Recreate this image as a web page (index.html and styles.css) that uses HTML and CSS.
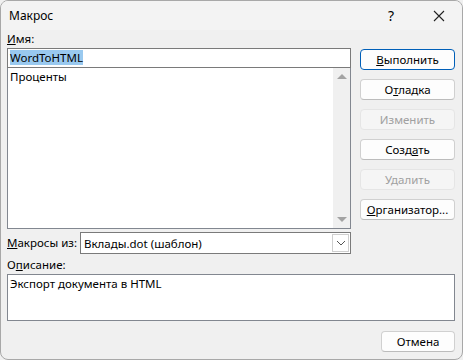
FILE: index.html
```html
<!DOCTYPE html>
<html lang="ru">
<head>
    <meta charset="UTF-8">
    <title>Макрос</title>
    <link rel="stylesheet" href="styles.css">
</head>
<body>
    <div class="dialog">
        <div class="titlebar">
            <span class="title">Макрос</span>
            <span class="help">?</span>
            <span class="close">
                <svg width="12" height="12" viewBox="0 0 12 12"><path d="M1 1 L11 11 M11 1 L1 11" stroke="#222" stroke-width="1.1" fill="none"/></svg>
            </span>
        </div>

        <div class="content">
            <div class="main">
                <div class="left">
                    <div class="label"><u>И</u>мя:</div>
                    <div class="name-input"><span class="selected">WordToHTML</span></div>
                    <div class="listbox">
                        <div class="items">Проценты</div>
                        <div class="scrollbar">
                            <span class="arrow up"></span>
                            <span class="arrow down"></span>
                        </div>
                    </div>
                    <div class="source-row">
                        <span class="label source-label"><u>М</u>акросы из:</span>
                        <div class="combo">
                            <span class="combo-text">Вклады.dot (шаблон)</span>
                            <span class="combo-btn">
                                <svg width="10" height="6" viewBox="0 0 10 6"><path d="M1 1 L5 5 L9 1" stroke="#555" stroke-width="1" fill="none"/></svg>
                            </span>
                        </div>
                    </div>
                    <div class="label desc-label">О<u>п</u>исание:</div>
                </div>
                <div class="buttons">
                    <button class="btn default"><u>В</u>ыполнить</button>
                    <button class="btn">О<u>т</u>ладка</button>
                    <button class="btn disabled">Изменить</button>
                    <button class="btn">Созд<u>а</u>ть</button>
                    <button class="btn disabled">Удалить</button>
                    <button class="btn"><u>О</u>рганизатор...</button>
                </div>
            </div>
            <div class="description">Экспорт документа в HTML</div>
            <div class="footer">
                <button class="btn cancel">Отмена</button>
            </div>
        </div>
    </div>
</body>
</html>
```

FILE: styles.css
```css
html, body {
    margin: 0;
    padding: 0;
    background-color: #f0f0f0;
}
body {
    font-family: "Noto Sans", Arial, sans-serif;
    font-size: 11.5px;
    color: #000;
}
.dialog {
    width: 463px;
    height: 360px;
    box-sizing: border-box;
    border: 1px solid #a8a8a8;
    border-radius: 8px;
    background-color: #f0f0f0;
    overflow: hidden;
}
.titlebar {
    height: 29px;
    display: flex;
    align-items: center;
    background-color: #f3f3f3;
}
.title {
    flex: 1;
    padding-left: 8px;
    font-size: 12px;
}
.help {
    width: 46px;
    text-align: center;
    font-size: 14px;
    margin-right: 2px;
}
.close {
    width: 46px;
    display: flex;
    justify-content: center;
}
.content {
    padding: 0 7px 0 6px;
}
.main {
    display: flex;
    gap: 9px;
}
.left {
    width: 344px;
}
.label {
    line-height: 18px;
    white-space: nowrap;
}
.name-input {
    height: 18px;
    border: 1px solid #7a7a7a;
    background-color: #fff;
    padding: 0 2px;
    line-height: 18px;
}
.selected {
    background-color: #99c9ef;
}
.listbox {
    height: 160px;
    border: 1px solid #828790;
    border-top: none;
    background-color: #fff;
    display: flex;
}
.items {
    flex: 1;
    padding: 1px 2px;
    line-height: 16px;
}
.scrollbar {
    width: 17px;
    background-color: #f0f0f0;
    display: flex;
    flex-direction: column;
    justify-content: space-between;
    align-items: center;
    padding: 6px 0;
}
.arrow {
    width: 0;
    height: 0;
    border-left: 5px solid transparent;
    border-right: 5px solid transparent;
}
.arrow.up {
    border-bottom: 5px solid #a3a3a3;
}
.arrow.down {
    border-top: 5px solid #a3a3a3;
}
.source-row {
    display: flex;
    align-items: center;
    margin-top: 3px;
}
.source-label {
    width: 73px;
    flex-shrink: 0;
}
.combo {
    flex: 1;
    height: 20px;
    border: 1px solid #7a7a7a;
    background-color: #fff;
    display: flex;
    align-items: center;
}
.combo-text {
    flex: 1;
    padding-left: 3px;
}
.combo-btn {
    width: 15px;
    height: 16px;
    margin-right: 1px;
    border: 1px solid #cfcfcf;
    display: flex;
    align-items: center;
    justify-content: center;
}
.desc-label {
    margin-top: 2px;
}
.buttons {
    width: 95px;
    padding-top: 19px;
    display: flex;
    flex-direction: column;
    gap: 9px;
}
.btn {
    height: 21px;
    width: 95px;
    font-family: inherit;
    font-size: 11.5px;
    line-height: 19px;
    color: #000;
    background-color: #fdfdfd;
    border: 1px solid #d0d0d0;
    border-bottom-color: #bcbcbc;
    border-radius: 4px;
    padding: 0;
}
.btn.default {
    border: 1px solid #005fb8;
}
.btn.disabled {
    color: #a0a0a0;
    background-color: #f5f5f5;
    border-color: #e5e5e5;
}
.description {
    height: 43px;
    border: 1px solid #828790;
    background-color: #fff;
    padding: 1px 2px;
    line-height: 16px;
}
.footer {
    display: flex;
    justify-content: flex-end;
    margin-top: 10px;
}
.btn.cancel {
    width: 74px;
}
```
